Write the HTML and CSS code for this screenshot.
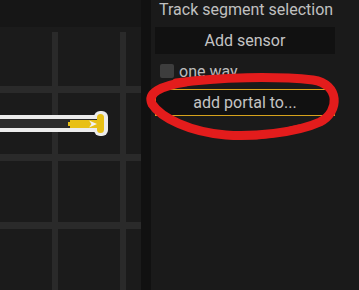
FILE: index.html
```html
<!DOCTYPE html>
<html lang="en">
<head>
    <meta charset="UTF-8">
    <meta name="viewport" content="width=device-width, initial-scale=1.0">
    <title>Track editor</title>
    <link rel="stylesheet" href="styles.css">
</head>
<body>

    <div class="editor">
        <!-- Canvas with the track layout -->
        <div class="canvas">
            <div class="canvas-bar"></div>
            <div class="grid"></div>
            <svg class="track" width="141" height="290" viewBox="0 0 141 290">
                <rect x="-10" y="115" width="112" height="17" fill="#ececec"/>
                <rect x="94" y="111" width="14" height="25" rx="6" fill="#ececec"/>
                <rect x="-10" y="119" width="108" height="9" fill="#2b2b2b"/>
                <rect x="68" y="122" width="3" height="4" fill="#e8c015"/>
                <rect x="70" y="120" width="28" height="8" fill="#e8c015"/>
                <polygon points="89,120.5 97,124 89,127.5 91.5,124" fill="#f2f2f2"/>
                <rect x="97" y="114" width="7" height="19" rx="3.5" fill="#e8c015"/>
            </svg>
        </div>

        <div class="divider"></div>

        <!-- Side panel -->
        <div class="panel">
            <div class="panel-title">Track segment selection</div>
            <button class="panel-btn">Add sensor</button>
            <label class="check-row">
                <span class="check-box"></span>
                <span>one way</span>
            </label>
            <button class="panel-btn selected">add portal to...</button>
        </div>
    </div>

    <!-- Hand drawn annotation -->
    <svg class="marker" width="359" height="290" viewBox="0 0 359 290">
        <path d="M 176 83 C 220 77, 275 76, 313 80 C 340 84, 340 112, 320 122 C 296 133, 252 137, 226 135 C 190 132, 161 118, 152 104 C 147 93, 160 86, 186 82"
              fill="none" stroke="#e31c1c" stroke-width="9" stroke-linecap="round"/>
        <path d="M 300 128 C 270 136, 240 138, 215 134"
              fill="none" stroke="#e31c1c" stroke-width="7" stroke-linecap="round"/>
    </svg>

</body>
</html>
```

FILE: styles.css
```css
/* Page */
body {
    margin: 0;
    background-color: #1b1b1b;
    font-family: 'Roboto', 'Liberation Sans', sans-serif;
    color: #c4c4c4;
    overflow: hidden;
}

.editor {
    display: flex;
    height: 290px;
}

/* Canvas */
.canvas {
    position: relative;
    width: 141px;
    background-color: #1b1b1b;
}

.canvas-bar {
    height: 27px;
    background-color: #161616;
}

.grid {
    margin-top: 5px;
    height: 258px;
    background-image:
        linear-gradient(to right, transparent 52px, #2a2a2a 52px, #2a2a2a 58px, transparent 58px),
        linear-gradient(to bottom, transparent 54px, #2a2a2a 54px, #2a2a2a 61px, transparent 61px);
    background-size: 68px 68px;
}

.track {
    position: absolute;
    left: 0;
    top: 0;
}

.divider {
    width: 10px;
    background-color: #111111;
}

/* Side panel */
.panel {
    flex: 1;
    background-color: #1a1a1a;
    padding: 0 24px 0 4px;
}

.panel-title {
    height: 26px;
    padding: 1px 0 0 4px;
    line-height: 18px;
    font-size: 16px;
    color: #c0c0c0;
    white-space: nowrap;
}

.panel-btn {
    display: block;
    width: 180px;
    height: 27px;
    padding: 0;
    border: none;
    background-color: #111111;
    color: #c4c4c4;
    font-family: inherit;
    font-size: 16px;
}

.panel-btn.selected {
    border: 1px solid #d6a21c;
}

.check-row {
    display: flex;
    align-items: center;
    gap: 5px;
    height: 14px;
    margin: 10px 0 11px 5px;
    font-size: 16px;
    color: #bdbdbd;
}

.check-box {
    width: 14px;
    height: 14px;
    border-radius: 2px;
    background-color: #3d3d3d;
}

/* Annotation */
.marker {
    position: absolute;
    left: 0;
    top: 0;
    pointer-events: none;
}
```
